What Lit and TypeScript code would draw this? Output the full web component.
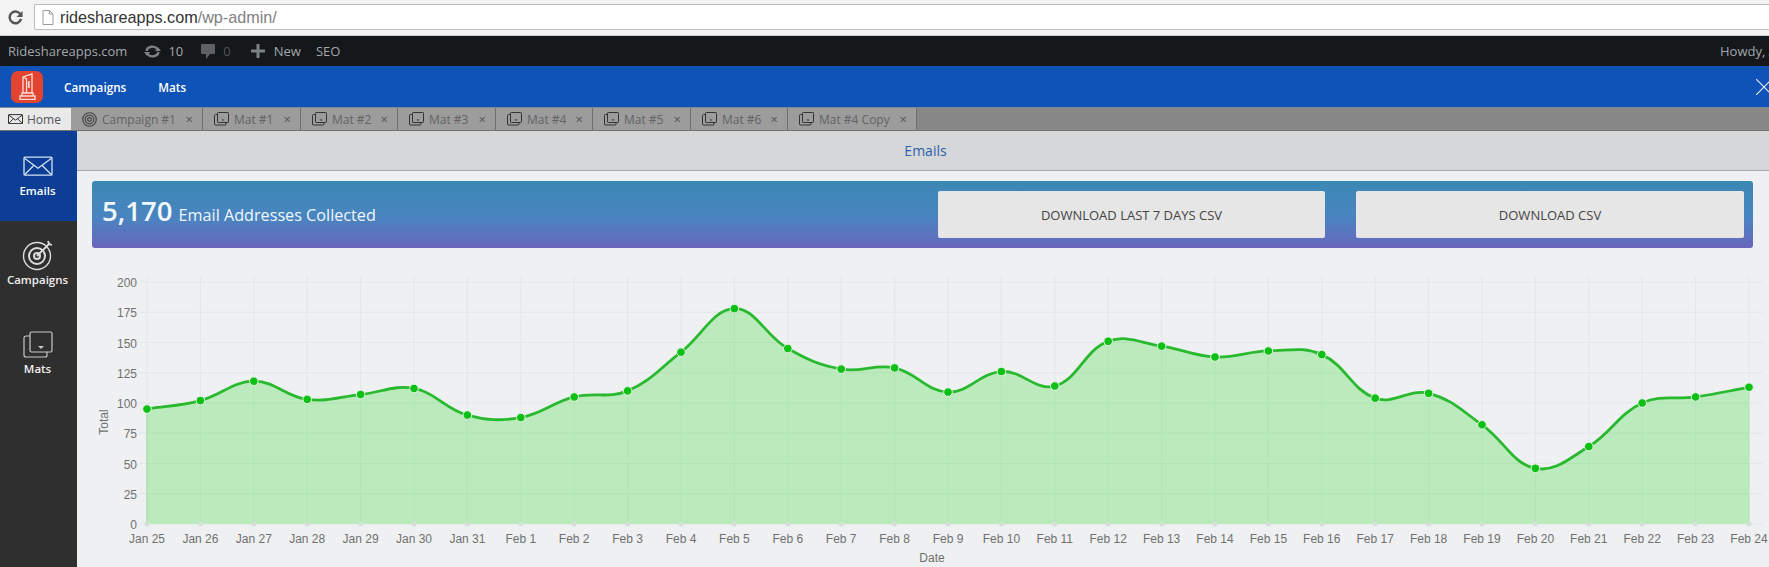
import { LitElement, html, svg, css } from 'lit';
import { customElement } from 'lit/decorators.js';

const LABELS = [
  'Jan 25', 'Jan 26', 'Jan 27', 'Jan 28', 'Jan 29', 'Jan 30', 'Jan 31',
  ...Array.from({ length: 24 }, (_, i) => `Feb ${i + 1}`),
];
const VALUES = [
  95, 102, 118, 103, 107, 112, 90, 88, 105, 110, 142, 178, 145, 128, 129, 109,
  126, 114, 151, 147, 138, 143, 140, 104, 108, 82, 46, 64, 100, 105, 113,
];
const TABS = [
  { label: 'Campaign #1', icon: 'target', width: 132 },
  { label: 'Mat #1', icon: 'mat', width: 98 },
  { label: 'Mat #2', icon: 'mat', width: 97 },
  { label: 'Mat #3', icon: 'mat', width: 98 },
  { label: 'Mat #4', icon: 'mat', width: 97 },
  { label: 'Mat #5', icon: 'mat', width: 98 },
  { label: 'Mat #6', icon: 'mat', width: 97 },
  { label: 'Mat #4 Copy', icon: 'mat', width: 129 },
];

// chart geometry, in svg coordinates
const X0 = 70;
const STEP = 53.4;
const Y0 = 276;
const PER_UNIT = 242 / 200;
const px = (i: number) => X0 + i * STEP;
const py = (v: number) => Y0 - v * PER_UNIT;

function curve(points: number[][], tension = 0.4) {
  const ctrl = points.map((p, i) => {
    const a = points[i - 1] ?? p;
    const b = points[i + 1] ?? p;
    const d01 = Math.hypot(p[0] - a[0], p[1] - a[1]);
    const d12 = Math.hypot(b[0] - p[0], b[1] - p[1]);
    const sum = d01 + d12 || 1;
    const fa = (tension * d01) / sum;
    const fb = (tension * d12) / sum;
    return {
      prev: [p[0] - fa * (b[0] - a[0]), p[1] - fa * (b[1] - a[1])],
      next: [p[0] + fb * (b[0] - a[0]), p[1] + fb * (b[1] - a[1])],
    };
  });
  let d = `M${points[0][0]} ${points[0][1]}`;
  for (let i = 1; i < points.length; i++) {
    const c1 = ctrl[i - 1].next;
    const c2 = ctrl[i].prev;
    d += `C${c1[0]} ${c1[1]} ${c2[0]} ${c2[1]} ${points[i][0]} ${points[i][1]}`;
  }
  return d;
}

const envelope = (size: number, color: string, sw: number) => html`<svg width=${size} height=${size * 0.68} viewBox="0 0 30 20" fill="none" stroke=${color} stroke-width=${sw}>
  <rect x="1" y="1" width="28" height="18" rx="1"></rect><path d="M1.500 2 15 12 28.500 2M1.500 18.500 11 9M28.500 18.500 19 9"></path>
</svg>`;

const target = (size: number, color: string) => html`<svg width=${size} height=${size} viewBox="0 0 32 32" fill="none" stroke=${color}>
  <circle cx="15" cy="17" r="13.500" stroke-width="1.400"></circle><circle cx="15" cy="17" r="8" stroke-width="2"></circle><circle cx="15" cy="17" r="3" stroke-width="2"></circle>
  <path d="M15 17 28 4M26 2l1 3 3 1" stroke-width="1.800"></path>
</svg>`;

const ring = (size: number, color: string) => html`<svg width=${size} height=${size} viewBox="0 0 16 16" fill="none" stroke=${color} stroke-width="1.200">
  <circle cx="8" cy="8" r="7.200"></circle><circle cx="8" cy="8" r="4.600"></circle><circle cx="8" cy="8" r="2"></circle>
</svg>`;

const mat = (w: number, color: string, sw: number) => html`<svg width=${w} height=${w * 0.9} viewBox="0 0 30 27" fill="none" stroke=${color} stroke-width=${sw}>
  <rect x="7" y="1" width="22" height="20" rx="1.500"></rect><path d="M7 5H3a2 2 0 0 0-2 2v17a2 2 0 0 0 2 2h19a2 2 0 0 0 2-2v-3"></path>
  <path d="M15 15h6l-3 3z" fill=${color} stroke="none"></path>
</svg>`;

@customElement('app-root')
export class AppRoot extends LitElement {
  static styles = css`
    :host {
      display: flex;
      flex-direction: column;
      width: 1769px;
      height: 567px;
      overflow: hidden;
      font-family: 'Open Sans', sans-serif;
      background: #eef0f2;
    }

    .browser {
      display: flex;
      align-items: center;
      flex: none;
      height: 36px;
      box-sizing: border-box;
      padding: 4px 0 5px 8px;
      gap: 11px;
      background: #f3f3f3;
      border-bottom: 1px solid #cfcfcf;
    }
    .url {
      flex: 1;
      display: flex;
      align-items: center;
      gap: 6px;
      height: 100%;
      box-sizing: border-box;
      padding-left: 7px;
      background: #fff;
      border: 1px solid #bdbdbd;
      border-right: none;
      border-radius: 2px 0 0 2px;
      font: 16.200px 'Liberation Sans', sans-serif;
      color: #808080;
    }
    .url b {
      font-weight: 400;
      color: #333;
    }

    .adminbar {
      display: flex;
      align-items: center;
      flex: none;
      height: 30px;
      padding-left: 8px;
      background: #15181b;
      color: #a3a7ab;
      font-size: 13px;
    }
    .adminbar .site { margin-right: 17px; }
    .adminbar .count { margin: 0 18px 0 7px; }
    .adminbar .dim { margin: 0 20px 0 8px; color: #555; }
    .adminbar .new { margin: 0 15px 0 9px; }
    .howdy {
      margin-left: auto;
      width: 49px;
      overflow: hidden;
      white-space: nowrap;
    }

    .appbar {
      display: flex;
      align-items: center;
      flex: none;
      height: 41px;
      padding-left: 11px;
      background: #0f52b8;
      color: #fff;
      font-size: 11.700px;
      font-weight: 600;
    }
    .logo {
      display: flex;
      align-items: center;
      justify-content: center;
      width: 32px;
      height: 32px;
      margin-right: 21px;
      border-radius: 7px;
      background: #e2442f;
    }
    .appbar .link { margin-right: 32px; }
    .appbar .close {
      margin-left: auto;
      display: block;
    }

    .tabs {
      display: flex;
      flex: none;
      height: 24px;
      box-sizing: border-box;
      background: #878787;
      border-top: 1px solid #7b8a9c;
      border-bottom: 1px solid #737373;
      font-size: 12px;
    }
    .tab {
      display: flex;
      align-items: center;
      box-sizing: border-box;
      padding-left: 11px;
      gap: 5px;
      background: #9c9c9c;
      color: #636363;
      border-right: 1px solid #6f6f6f;
    }
    .tab.home {
      width: 71px;
      padding-left: 8px;
      gap: 4px;
      background: #e9e9e9;
      color: #555;
      border-right: none;
    }
    .tab .x {
      margin-left: auto;
      margin-right: 9px;
      color: #555;
      font-size: 13px;
    }

    .body {
      display: flex;
      flex: 1;
      min-height: 0;
    }
    .sidebar {
      flex: none;
      width: 77px;
      background: #2f2f2f;
      color: #eee;
      font-size: 11.500px;
      font-weight: 600;
      text-align: center;
    }
    .nav {
      display: flex;
      flex-direction: column;
      align-items: center;
      box-sizing: border-box;
      padding-right: 2px;
    }
    .nav.active {
      height: 90px;
      padding-top: 25px;
      gap: 7px;
      background: #0b3e94;
      color: #fff;
    }
    .nav.campaigns { height: 89px; padding-top: 18px; gap: 1px; }
    .nav.mats { padding-top: 21px; gap: 3px; }

    .main {
      flex: 1;
      min-width: 0;
    }
    .title {
      height: 40px;
      box-sizing: border-box;
      padding: 10px 0 0 5px;
      background: #d6d7d9;
      border-bottom: 1px solid #a9a9a9;
      color: #2a60ac;
      font-size: 14px;
      text-align: center;
    }
    .banner {
      display: flex;
      align-items: center;
      height: 67px;
      box-sizing: border-box;
      margin: 10px 16px 0 15px;
      padding: 0 9px 0 10px;
      border-radius: 3px;
      background: linear-gradient(#3a89b4 0%, #4a84c0 55%, #6966bd 100%);
      color: #f1f7fb;
    }
    .summary {
      flex: 1;
      padding-bottom: 8px;
      font-size: 16.200px;
      white-space: nowrap;
    }
    .summary strong {
      font-size: 27.500px;
      font-weight: 600;
      margin-right: 2px;
    }
    .actions {
      display: grid;
      grid-template-columns: 387px 388px;
      gap: 31px;
    }
    .btn {
      height: 47px;
      border: none;
      border-radius: 2px;
      background: #e6e6e6;
      color: #444;
      font: 13px 'Open Sans', sans-serif;
      text-transform: uppercase;
    }

    .chart {
      display: block;
      font: 12px 'Liberation Sans', sans-serif;
    }
    .chart text { fill: #707070; }
    .grid { stroke: #e4e6e8; stroke-width: 1; }
    .area { fill: #bbebbc; }
    .line { fill: none; stroke: #28b92f; stroke-width: 2.800; }
    .dot { fill: #0cc014; stroke: #e9f5ea; stroke-width: 1; }
    .tick { fill: #d4e0d6; }
  `;

  renderChart() {
    const pts = VALUES.map((v, i) => [px(i), py(v)]);
    const line = curve(pts);
    const area = `${line}L${px(30)} ${Y0}L${X0} ${Y0}Z`;
    return html`<svg class="chart" width="1692" height="319" viewBox="0 0 1692 319">
      <clipPath id="under"><path d=${area}></path></clipPath>
      ${[0, 25, 50, 75, 100, 125, 150, 175, 200].map(
        (v) => svg`<line class="grid" x1=${X0 - 8} x2=${px(30) + 14} y1=${py(v)} y2=${py(v)}></line>
          <text x=${X0 - 10} y=${py(v) + 5} text-anchor="end">${v}</text>`,
      )}
      ${LABELS.map(
        (_, i) => svg`<line class="grid" x1=${px(i)} x2=${px(i)} y1=${py(200) - 6} y2=${Y0 + 2}></line>`,
      )}
      <path class="area" d=${area}></path>
      <line x1=${X0} x2=${X0} y1=${py(VALUES[0])} y2=${Y0} stroke="#9fd3a2"></line>
      ${LABELS.map(
        (_, i) => svg`<line x1=${px(i)} x2=${px(i)} y1=${py(VALUES[i])} y2=${Y0} stroke="#b2e4b3" stroke-width="1"></line>`,
      )}
      ${[25, 50, 75, 100, 125, 150, 175].map(
        (v) => svg`<line x1=${X0} x2=${px(30)} y1=${py(v)} y2=${py(v)} stroke="#b2e4b3" stroke-width="1" clip-path="url(#under)"></line>`,
      )}
      <path class="line" d=${line}></path>
      ${pts.map(
        (p, i) => svg`<circle class="dot" cx=${p[0]} cy=${p[1]} r="4.300"></circle>
          <circle class="tick" cx=${p[0]} cy=${Y0} r="2.500"></circle>
          <text x=${p[0]} y=${Y0 + 19} text-anchor="middle">${LABELS[i]}</text>`,
      )}
      <text x="855" y="314" text-anchor="middle">Date</text>
      <text transform="translate(31 174) rotate(-90)" text-anchor="middle">Total</text>
    </svg>`;
  }

  render() {
    return html`
      <div class="browser">
        <svg width="15" height="15" viewBox="0 0 16 16" fill="none" stroke="#555" stroke-width="2.600">
          <path d="M13.500 5A6.200 6.200 0 1 0 14 9.500"></path><path d="M15.500 1v6.500H9z" fill="#555" stroke="none"></path>
        </svg>
        <div class="url">
          <svg width="12" height="15" viewBox="0 0 12 15" fill="#fff" stroke="#9a9a9a">
            <path d="M1 .5h6.500L11 4v10.500H1z"></path><path d="M7.500.5V4H11" fill="none"></path>
          </svg>
          <span><b>rideshareapps.com</b>/wp-admin/</span>
        </div>
      </div>

      <div class="adminbar">
        <span class="site">Rideshareapps.com</span>
        <svg width="17" height="13" viewBox="0 0 17 13" fill="none" stroke="#7d8185" stroke-width="2.400">
          <path d="M2.500 6a6 5 0 0 1 11-2M14.500 7a6 5 0 0 1-11 2"></path>
          <path d="M11 6h6l-3-4zM0 7h6l-3 4z" fill="#7d8185" stroke="none"></path>
        </svg>
        <span class="count">10</span>
        <svg width="14" height="15" viewBox="0 0 14 15" fill="#5d6165">
          <path d="M1 0h12a1 1 0 0 1 1 1v8a1 1 0 0 1-1 1H9l-4 5v-5H1a1 1 0 0 1-1-1V1a1 1 0 0 1 1-1z"></path>
        </svg>
        <span class="dim">0</span>
        <svg width="14" height="14" viewBox="0 0 14 14" fill="#7d8185"><path d="M5.500 0h3v5.500H14v3H8.500V14h-3V8.500H0v-3h5.500z"></path></svg>
        <span class="new">New</span>
        <span>SEO</span>
        <span class="howdy">Howdy, A</span>
      </div>

      <div class="appbar">
        <div class="logo">
          <svg width="17" height="27" viewBox="0 0 17 27" fill="none" stroke="#f8dcd6" stroke-width="1.300">
            <path d="M4 20V4l9-3v19M4 4l3.500 2v14"></path>
            <path d="M11 9H9.500v2.500H11M9.500 11.500V14H11"></path>
            <path d="M1 23h15v3.300H1zM3 20h11v3H3z"></path>
          </svg>
        </div>
        <span class="link">Campaigns</span>
        <span class="link">Mats</span>
        <svg class="close" width="13" height="16" viewBox="0 0 13 16" fill="none" stroke="#e8eef8" stroke-width="1.200">
          <path d="M0 0 16 16M16 0 0 16"></path>
        </svg>
      </div>

      <div class="tabs">
        <div class="tab home">${envelope(15, '#333', 2)}<span>Home</span></div>
        ${TABS.map(
          (t) => html`<div class="tab" style="width:${t.width}px">
            ${t.icon === 'target' ? ring(15, '#3f3f3f') : mat(15, '#333', 2)}
            <span>${t.label}</span><span class="x">×</span>
          </div>`,
        )}
      </div>

      <div class="body">
        <nav class="sidebar">
          <div class="nav active">${envelope(30, '#d4e2f6', 1.300)}<span>Emails</span></div>
          <div class="nav campaigns">${target(32, '#dcdcdc')}<span>Campaigns</span></div>
          <div class="nav mats">${mat(30, '#c9c9c9', 1.200)}<span>Mats</span></div>
        </nav>
        <main class="main">
          <div class="title">Emails</div>
          <div class="banner">
            <div class="summary"><strong>5,170</strong> Email Addresses Collected</div>
            <div class="actions">
              <button class="btn">Download last 7 days CSV</button>
              <button class="btn">Download CSV</button>
            </div>
          </div>
          ${this.renderChart()}
        </main>
      </div>
    `;
  }
}
